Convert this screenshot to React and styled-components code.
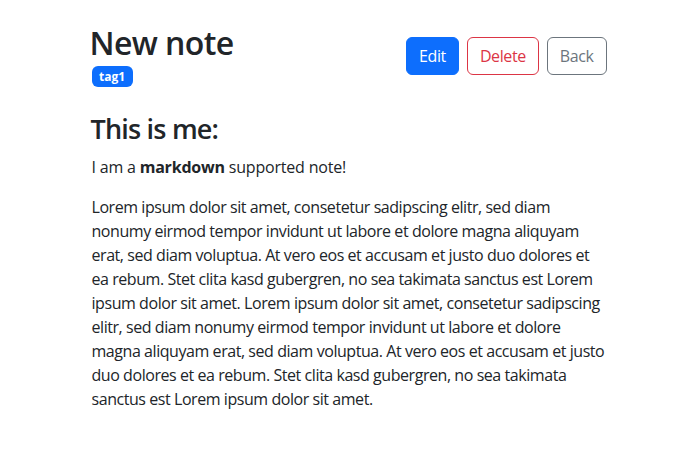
import React from 'react';
import styled, { createGlobalStyle } from 'styled-components';

const GlobalStyle = createGlobalStyle`
  body {
    margin: 0;
    font-family: "Segoe UI", "Open Sans", sans-serif;
    font-size: 16px;
    line-height: 1.5;
    letter-spacing: -0.2px;
    color: #212529;
    background: #fff;
  }
`;

const Container = styled.div`
  max-width: 540px;
  margin: 24px auto;
  padding: 0 12px;
  box-sizing: border-box;
`;

const Header = styled.div`
  display: flex;
  align-items: center;
  justify-content: space-between;
  margin-bottom: 26px;
`;

const TitleStack = styled.div`
  display: flex;
  flex-direction: column;
  gap: 4px;
`;

const Title = styled.h1`
  margin: 0 0 0 -2px;
  font-size: 32px;
  font-weight: 600;
  line-height: 1.2;
  letter-spacing: -0.6px;
`;

const Tags = styled.div`
  display: flex;
  gap: 4px;
`;

const Badge = styled.span`
  display: inline-block;
  padding: 4.5px 7.5px 4.5px;
  font-size: 12px;
  font-weight: 700;
  line-height: 1;
  letter-spacing: 0;
  color: #fff;
  background: #0d6efd;
  border-radius: 6px;
`;

const Actions = styled.div`
  display: flex;
  gap: 8px;
  margin-right: 1px;
`;

const colors = {
  primary: '#0d6efd',
  danger: '#dc3545',
  secondary: '#6c757d',
};

const Button = styled.button`
  font-family: inherit;
  font-size: 16px;
  line-height: 1.5;
  letter-spacing: -0.4px;
  padding: 6px 12px;
  border-radius: 6px;
  border: 1px solid ${({ variant }) => colors[variant]};
  background: ${({ outline, variant }) => (outline ? 'transparent' : colors[variant])};
  color: ${({ outline, variant }) => (outline ? colors[variant] : '#fff')};
  cursor: pointer;
`;

const Body = styled.div`
  h2 {
    margin: 0 0 9px -1px;
    font-size: 27px;
    font-weight: 600;
    line-height: 1.2;
    letter-spacing: -0.8px;
  }
  p {
    margin: 0 0 16px;
  }
`;

const Prose = styled.p`
  letter-spacing: -0.44px;
`;

export default function App() {
  return (
    <>
      <GlobalStyle />
      <Container>
        <Header>
          <TitleStack>
            <Title>New note</Title>
            <Tags>
              <Badge>tag1</Badge>
            </Tags>
          </TitleStack>
          <Actions>
            <Button variant="primary">Edit</Button>
            <Button variant="danger" outline>Delete</Button>
            <Button variant="secondary" outline>Back</Button>
          </Actions>
        </Header>
        <Body>
          <h2>This is me:</h2>
          <p>I am a <strong>markdown</strong> supported note!</p>
          <Prose>
            Lorem ipsum dolor sit amet, consetetur sadipscing elitr, sed diam nonumy eirmod tempor invidunt ut labore et dolore magna aliquyam erat, sed diam voluptua. At vero eos et accusam et justo duo dolores et ea rebum. Stet clita kasd gubergren, no sea takimata sanctus est Lorem ipsum dolor sit amet. Lorem ipsum dolor sit amet, consetetur sadipscing elitr, sed diam nonumy eirmod tempor invidunt ut labore et dolore magna aliquyam erat, sed diam voluptua. At vero eos et accusam et justo duo dolores et ea rebum. Stet clita kasd gubergren, no sea takimata sanctus est Lorem ipsum dolor sit amet.
          </Prose>
        </Body>
      </Container>
    </>
  );
}
